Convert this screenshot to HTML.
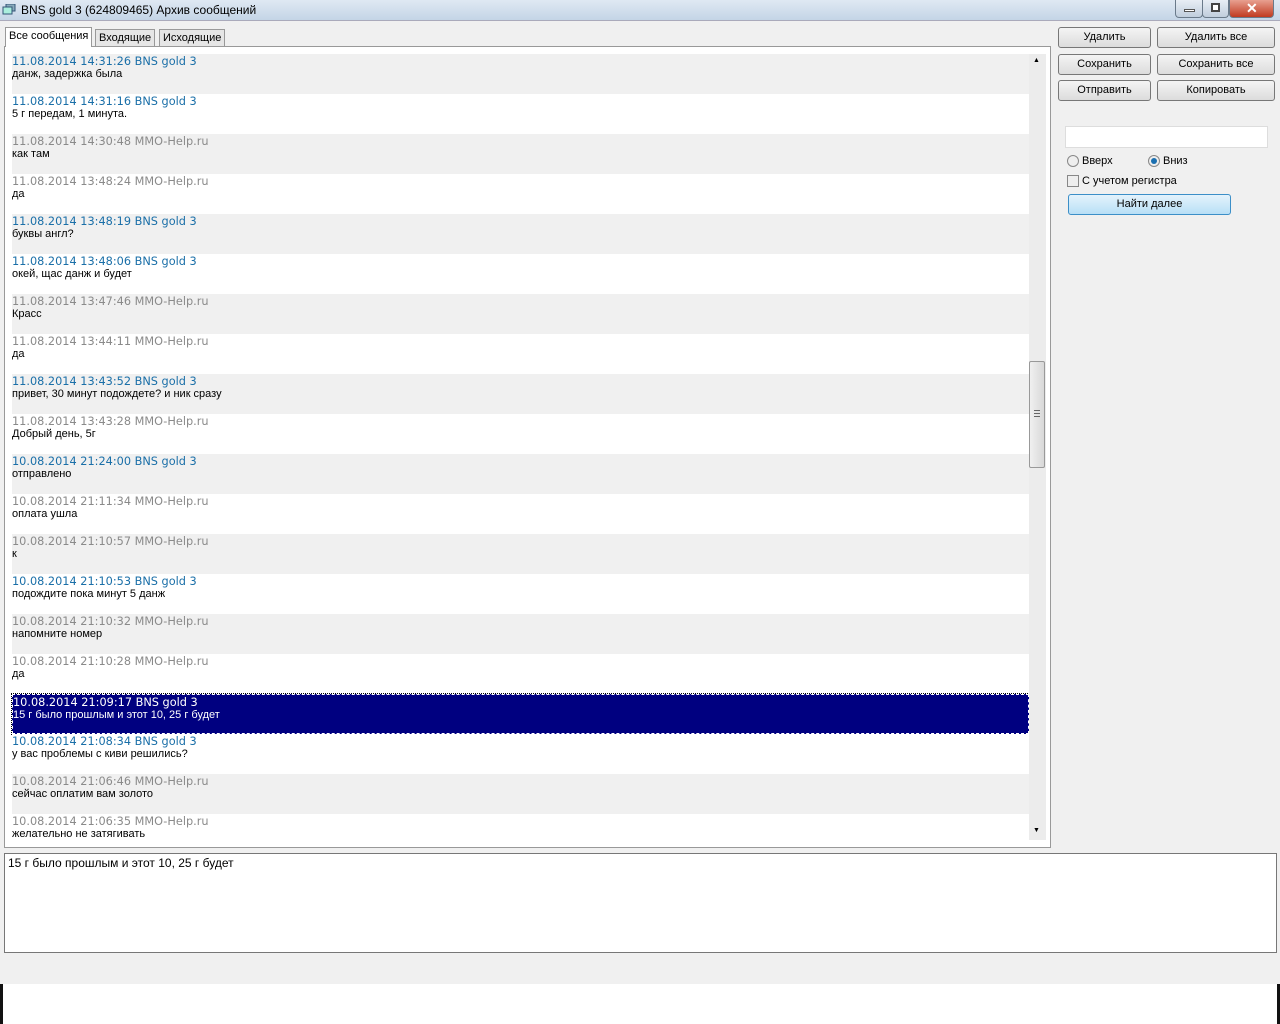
<!DOCTYPE html>
<html><head><meta charset="utf-8"><style>
*{margin:0;padding:0;box-sizing:border-box}
body{width:1280px;height:1024px;background:#f0f0f0;font-family:"Liberation Sans",sans-serif;position:relative;overflow:hidden}
.title{position:absolute;left:0;top:0;width:1280px;height:21px;background:linear-gradient(#dfe9f3,#c4d5e6);border-bottom:1px solid #aab}
.title span{position:absolute;left:21px;top:3px;font-size:12px;color:#000}
.wb{position:absolute;top:0;height:18px;border:1px solid #6a7a8a;border-top:none;border-radius:0 0 4px 4px;background:linear-gradient(#e8eef5,#c0cedd)}
.tab{position:absolute;font-size:11px;border:1px solid #999;border-bottom:none;background:#e6e6e6;padding:3px 3px 0 3px;height:19px}
.panel{position:absolute;left:4px;top:46px;width:1047px;height:802px;background:#fff;border:1px solid #999}
.row{position:absolute;left:7px;width:1017px;height:40px}
.row .h{position:absolute;left:0;top:0;font-family:"DejaVu Sans",sans-serif;font-size:11.3px;line-height:15px}
.row .m{position:absolute;left:0;top:14px;font-size:11px;line-height:13px;color:#000}
.b{color:#1a6fa8}.g{color:#8a8a8a}
.btn{position:absolute;height:21px;border:1px solid #777;border-radius:3px;background:linear-gradient(#f4f4f4,#dcdcdc);font-size:11px;text-align:center;line-height:19px}
</style></head><body>
<div class="title"><svg style="position:absolute;left:2px;top:4px" width="14" height="12"><rect x="4" y="0" width="9" height="7" fill="#8ab" stroke="#357"/><rect x="1" y="3" width="9" height="7" fill="#aed" stroke="#357"/></svg><span>BNS gold 3 (624809465) Архив сообщений</span></div>
<div class="wb" style="left:1175px;width:28px"><div style="position:absolute;left:8px;top:9px;width:11px;height:3px;background:#fff;border:1px solid #555"></div></div>
<div class="wb" style="left:1202px;width:27px"><div style="position:absolute;left:8px;top:3px;width:9px;height:9px;border:2px solid #444;background:#fff"></div></div>
<div class="wb" style="left:1229px;width:45px;background:linear-gradient(#e8a090,#c03a20)"><span style="position:absolute;left:16px;top:0;color:#fff;font-weight:bold;font-size:14px">✕</span></div>

<div class="tab" style="left:5px;top:27px;height:20px;background:#fff;z-index:2;padding-top:2px">Все сообщения</div>
<div class="tab" style="left:95px;top:29px;height:17px;padding-top:2px">Входящие</div>
<div class="tab" style="left:159px;top:29px;height:17px;padding-top:2px">Исходящие</div>

<div class="panel">
<div id="rows"></div>
<div style="position:absolute;left:1024px;top:7px;width:17px;height:786px;background:#ececec"></div>
<div style="position:absolute;left:1028px;top:10px;font-size:7px">▲</div>
<div style="position:absolute;left:1028px;top:780px;font-size:7px">▼</div>
<div style="position:absolute;left:1024px;top:314px;width:16px;height:107px;border:1px solid #999;border-radius:2px;background:linear-gradient(90deg,#f0f0f0,#d8d8d8)"></div>
<div style="position:absolute;left:1029px;top:363px;width:6px;height:7px;border-top:1px solid #666;border-bottom:1px solid #666"><div style="margin-top:2px;border-top:1px solid #666"></div></div>
</div>

<div class="btn" style="left:1058px;top:27px;width:93px">Удалить</div>
<div class="btn" style="left:1157px;top:27px;width:118px">Удалить все</div>
<div class="btn" style="left:1058px;top:54px;width:93px">Сохранить</div>
<div class="btn" style="left:1157px;top:54px;width:118px">Сохранить все</div>
<div class="btn" style="left:1058px;top:80px;width:93px">Отправить</div>
<div class="btn" style="left:1157px;top:80px;width:118px">Копировать</div>
<div style="position:absolute;left:1065px;top:126px;width:203px;height:22px;background:#fff;border:1px solid #ddd"></div>
<div style="position:absolute;left:1067px;top:155px;width:12px;height:12px;border-radius:50%;border:1px solid #888;background:#eee"></div>
<div style="position:absolute;left:1082px;top:155px;font-size:11px">Вверх</div>
<div style="position:absolute;left:1148px;top:155px;width:12px;height:12px;border-radius:50%;border:1px solid #888;background:#eee"><div style="margin:2px;width:6px;height:6px;border-radius:50%;background:#1a6fb0"></div></div>
<div style="position:absolute;left:1163px;top:155px;font-size:11px">Вниз</div>
<div style="position:absolute;left:1067px;top:175px;width:12px;height:12px;border:1px solid #888;background:#eee"></div>
<div style="position:absolute;left:1082px;top:175px;font-size:11px">С учетом регистра</div>
<div class="btn" style="left:1068px;top:194px;width:163px;border-color:#3c8fc8;background:linear-gradient(#e4f3fc,#b8dff6)">Найти далее</div>

<div style="position:absolute;left:4px;top:853px;width:1273px;height:100px;background:#fff;border:1px solid #777;font-size:12px;padding:2px 3px">15 г было прошлым и этот 10, 25 г будет</div>
<div style="position:absolute;left:0;top:984px;width:1280px;height:40px;background:#fff;border-left:3px solid #111;border-right:3px solid #111"></div>

<script>
var d=[["11.08.2014 14:31:26 BNS gold 3","данж, задержка была",1],["11.08.2014 14:31:16 BNS gold 3","5 г передам, 1 минута.",1],["11.08.2014 14:30:48 MMO-Help.ru","как там",0],["11.08.2014 13:48:24 MMO-Help.ru","да",0],["11.08.2014 13:48:19 BNS gold 3","буквы англ?",1],["11.08.2014 13:48:06 BNS gold 3","окей, щас данж и будет",1],["11.08.2014 13:47:46 MMO-Help.ru","Красс",0],["11.08.2014 13:44:11 MMO-Help.ru","да",0],["11.08.2014 13:43:52 BNS gold 3","привет, 30 минут подождете? и ник сразу",1],["11.08.2014 13:43:28 MMO-Help.ru","Добрый день, 5г",0],["10.08.2014 21:24:00 BNS gold 3","отправлено",1],["10.08.2014 21:11:34 MMO-Help.ru","оплата ушла",0],["10.08.2014 21:10:57 MMO-Help.ru","к",0],["10.08.2014 21:10:53 BNS gold 3","подождите пока минут 5 данж",1],["10.08.2014 21:10:32 MMO-Help.ru","напомните номер",0],["10.08.2014 21:10:28 MMO-Help.ru","да",0],["10.08.2014 21:09:17 BNS gold 3","15 г было прошлым и этот 10, 25 г будет",2],["10.08.2014 21:08:34 BNS gold 3","у вас проблемы с киви решились?",1],["10.08.2014 21:06:46 MMO-Help.ru","сейчас оплатим вам золото",0],["10.08.2014 21:06:35 MMO-Help.ru","желательно не затягивать",0]];
var h="";d.forEach(function(r,i){var top=7+i*40;var bg=i%2==0?"#f0f0f0":"#fff";var hc=r[2]==1?"b":"g";var st="";
if(r[2]==2){bg="#000080";st="border:1px dashed #fff;outline:1px dotted #000;";}
var ht=top+40>793?793-top:40;
h+='<div class="row" style="top:'+top+'px;height:'+ht+'px;overflow:hidden;background:'+bg+';'+st+'"><div class="h '+(r[2]==2?'':hc)+'" style="'+(r[2]==2?'color:#fff':'')+'">'+r[0]+'</div><div class="m" style="'+(r[2]==2?'color:#fff':'')+'">'+r[1]+'</div></div>';});
document.getElementById("rows").innerHTML=h;
</script>
</body></html>
